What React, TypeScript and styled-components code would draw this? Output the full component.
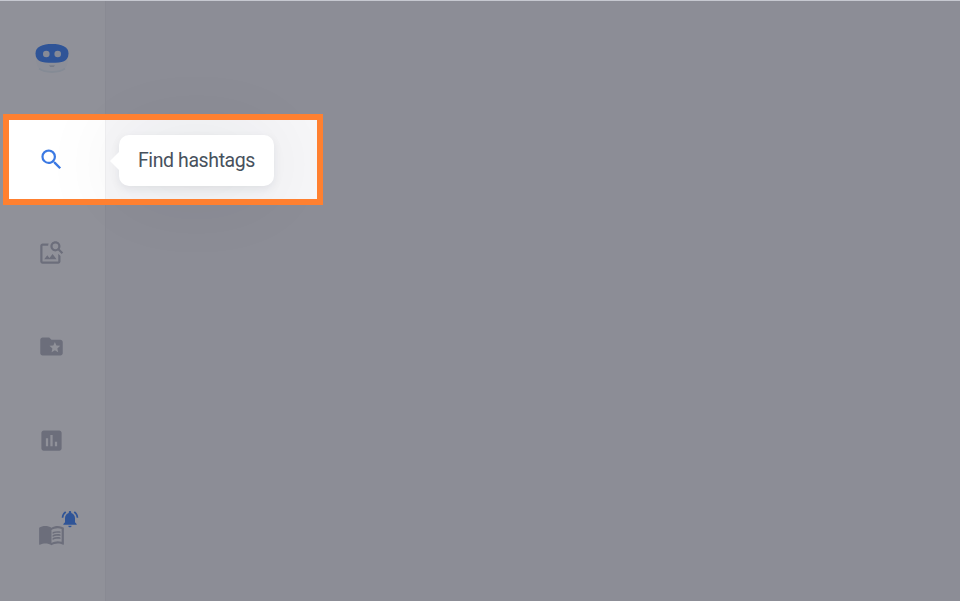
import React from 'react';
import styled, { createGlobalStyle } from 'styled-components';
import {
  MdAssessment,
  MdFolderSpecial,
  MdMenuBook,
  MdNotificationsActive,
  MdOutlineImageSearch,
  MdSearch
} from 'react-icons/md';

const GlobalStyle = createGlobalStyle`
  * {
    box-sizing: border-box;
  }

  body {
    margin: 0;
    overflow: hidden;
    font-family: Roboto, 'Open Sans', sans-serif;
  }
`;

const Page = styled.div`
  position: relative;
  display: flex;
  width: 960px;
  height: 601px;
  overflow: hidden;
  background: #f7f7f9;
`;

const Sidebar = styled.nav`
  width: 106px;
  flex-shrink: 0;
  display: flex;
  flex-direction: column;
  align-items: center;
  padding: 41px 2px 0 0;
  background: #fff;
  border-right: 1px solid #f0f0f2;
`;

const Logo = styled.svg`
  width: 38px;
  height: 36px;
  margin-bottom: 68.5px;
`;

const NavList = styled.div`
  display: flex;
  flex-direction: column;
  gap: 66.75px;
`;

const NavItem = styled.button<{ $active?: boolean }>`
  position: relative;
  width: 27px;
  height: 27px;
  padding: 0;
  border: none;
  background: none;
  color: ${({ $active }) => ($active ? '#3b79e3' : '#b7b9c3')};

  svg {
    display: block;
    width: 27px;
    height: 27px;
  }
`;

const Badge = styled.span`
  position: absolute;
  top: -12px;
  left: 22px;
  color: #3c84fa;

  && svg {
    width: 20px;
    height: 20px;
  }
`;

const Content = styled.main`
  flex: 1;
`;

const Tooltip = styled.div`
  position: absolute;
  top: 135px;
  left: 119px;
  display: flex;
  align-items: center;
  justify-content: center;
  width: 155px;
  height: 51px;
  padding-bottom: 1px;
  background: #fff;
  border-radius: 10px;
  box-shadow: 0 4px 90px rgba(30, 32, 46, 0.11), 0 3px 8px rgba(30, 32, 46, 0.08);
  font-size: 19.5px;
  letter-spacing: -0.4px;
  color: #47515d;
  white-space: nowrap;

  &::before {
    content: '';
    position: absolute;
    top: 17px;
    left: -9px;
    border: 9px solid transparent;
    border-right: 9px solid #fff;
    border-left: none;
  }
`;

const Spotlight = styled.div`
  position: absolute;
  top: 114px;
  left: 3px;
  width: 320px;
  height: 91.4px;
  border: 6px solid #ff8030;
  box-shadow: 0 0 0 1000px rgba(34, 36, 52, 0.5);
  pointer-events: none;
`;

const TopEdge = styled.div`
  position: absolute;
  top: 0;
  left: 0;
  right: 0;
  height: 1px;
  background: #c6c8d0;
`;

const navItems = [
  { key: 'search', label: 'Find hashtags', icon: <MdSearch />, active: true },
  { key: 'image', label: 'Search by image', icon: <MdOutlineImageSearch /> },
  { key: 'saved', label: 'Saved', icon: <MdFolderSpecial /> },
  { key: 'reports', label: 'Reports', icon: <MdAssessment /> },
  { key: 'guide', label: 'Guide', icon: <MdMenuBook />, alert: true }
];

const RobotLogo: React.FC = () => (
  <Logo viewBox="0 0 38 36">
    <path d="M3 19C3 28 9 31.5 19 31.5S35 28 35 19z" fill="#f9fbfd" />
    <path d="M6 27.5C12 32 26 32 32 27.5" fill="none" stroke="#e9f2f6" strokeWidth="2" />
    <path
      d="M19 3C28.5 3 35.5 5.6 35.5 12.4C35.5 20.3 29 21.8 19 21.8S2.5 20.3 2.5 12.4C2.5 5.6 9.5 3 19 3z"
      fill="#3c84fa"
    />
    <circle cx="13.3" cy="13" r="3.3" fill="#eaf1f8" />
    <circle cx="24.7" cy="13" r="3.3" fill="#eaf1f8" />
    <path d="M16 24.5h6l-1.2 1.2h-3.6z" fill="#bcc6d2" />
  </Logo>
);

const App: React.FC = () => (
  <>
    <GlobalStyle />
    <Page>
      <Sidebar>
        <RobotLogo />
        <NavList>
          {navItems.map(({ key, label, icon, active, alert }) => (
            <NavItem key={key} $active={active} aria-label={label}>
              {icon}
              {alert && (
                <Badge>
                  <MdNotificationsActive />
                </Badge>
              )}
            </NavItem>
          ))}
        </NavList>
      </Sidebar>
      <Content />
      <Tooltip>Find hashtags</Tooltip>
      <Spotlight />
      <TopEdge />
    </Page>
  </>
);

export default App;
